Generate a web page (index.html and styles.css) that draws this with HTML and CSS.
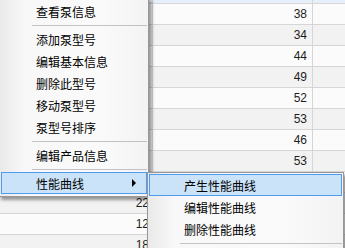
FILE: index.html
```html
<!DOCTYPE html>
<html>
<head>
<meta charset="utf-8">
<link rel="stylesheet" href="styles.css">
</head>
<body>
<div class="grid">
  <div class="row top"><div class="c c1"></div><div class="c c2"></div><div class="c c3"></div></div>
  <div class="row"><div class="c c1">31</div><div class="c c2">38</div><div class="c c3"></div></div>
  <div class="row"><div class="c c1">25</div><div class="c c2">34</div><div class="c c3"></div></div>
  <div class="row"><div class="c c1">31</div><div class="c c2">44</div><div class="c c3"></div></div>
  <div class="row"><div class="c c1">34</div><div class="c c2">49</div><div class="c c3"></div></div>
  <div class="row"><div class="c c1">31</div><div class="c c2">52</div><div class="c c3"></div></div>
  <div class="row"><div class="c c1">35</div><div class="c c2">53</div><div class="c c3"></div></div>
  <div class="row"><div class="c c1">35</div><div class="c c2">46</div><div class="c c3"></div></div>
  <div class="row"><div class="c c1">35</div><div class="c c2">53</div><div class="c c3"></div></div>
  <div class="row"><div class="c c1">26</div><div class="c c2">41</div><div class="c c3"></div></div>
  <div class="row"><div class="c c1">22</div><div class="c c2">36</div><div class="c c3"></div></div>
  <div class="row"><div class="c c1">12</div><div class="c c2">28</div><div class="c c3"></div></div>
  <div class="row"><div class="c c1">18</div><div class="c c2">30</div><div class="c c3"></div></div>
</div>

<div class="menu main">
  <div class="item">查看泵信息</div>
  <div class="sep"></div>
  <div class="item">添加泵型号</div>
  <div class="item">编辑基本信息</div>
  <div class="item">删除此型号</div>
  <div class="item">移动泵型号</div>
  <div class="item">泵型号排序</div>
  <div class="sep"></div>
  <div class="item">编辑产品信息</div>
  <div class="sep"></div>
  <div class="item active has-sub">性能曲线<span class="arrow"></span></div>
</div>

<div class="menu sub">
  <div class="item active">产生性能曲线</div>
  <div class="item">编辑性能曲线</div>
  <div class="item">删除性能曲线</div>
  <div class="sep"></div>
</div>
</body>
</html>
```
FILE: styles.css
```css
html, body {
  margin: 0;
  padding: 0;
  width: 345px;
  height: 248px;
  overflow: hidden;
  background: #ffffff;
  position: relative;
}

.grid {
  display: flex;
  flex-direction: column;
  font-family: "Liberation Sans", "Open Sans", sans-serif;
  font-size: 12px;
  color: #1e1e1e;
}

.row {
  display: grid;
  grid-template-columns: 153px 160px 1fr;
  height: 21px;
  background: #f2f2f2;
}

.row:nth-child(even) {
  background: #fbfbfb;
}

.row.top {
  height: 4px;
  background: #e6f0fb;
}

.c {
  border-right: 1px solid #d6d6d6;
  border-bottom: 1px solid #d6d6d6;
  text-align: right;
  line-height: 20px;
  overflow: hidden;
}

.c1 { padding-right: 3px; }
.c2 { padding-right: 5px; }
.c3 { border-right: none; }

.menu {
  position: absolute;
  border: 1px solid #979797;
  background: linear-gradient(to right, #e9e9e9 0, #f8f8f8 26px, #fafafa 70%, #f3f3f3 100%);
  box-shadow: 3px 3px 3px rgba(0, 0, 0, 0.38);
  font-family: "Noto Sans CJK SC", "Noto Sans", sans-serif;
  font-size: 12px;
  color: #000;
  display: flex;
  flex-direction: column;
}

.main {
  left: -2px;
  top: -3px;
  width: 146px;
  padding: 2px 1px 2px 2px;
}

.sub {
  left: 147px;
  top: 172px;
  width: 193px;
  padding: 1px 1px 12px 1px;
}

.item {
  height: 22px;
  line-height: 22px;
  padding-left: 34px;
  border: 1px solid transparent;
  box-sizing: border-box;
  position: relative;
  white-space: nowrap;
}

.item.active {
  background: #cbe3f9;
  border-color: #4d9cf0;
}

.sep {
  height: 6px;
  margin-left: 31px;
  display: flex;
  align-items: center;
}

.sep::before {
  content: "";
  display: block;
  height: 1px;
  width: 100%;
  background: #c3c3c3;
}

.arrow {
  position: absolute;
  right: 10px;
  top: 6px;
  width: 0;
  height: 0;
  border-left: 4px solid #000;
  border-top: 4px solid transparent;
  border-bottom: 4px solid transparent;
}
```
